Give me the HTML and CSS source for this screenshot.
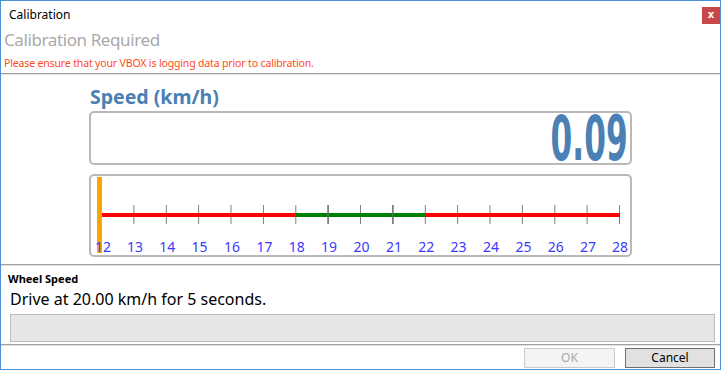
FILE: index.html
```html
<!DOCTYPE html>
<html>
<head>
<meta charset="utf-8">
<link rel="stylesheet" href="styles.css">
</head>
<body>
<div class="window">
  <div class="titlebar">
    <span class="title">Calibration</span>
    <span class="close">x</span>
  </div>
  <div class="header">
    <div class="h-title">Calibration Required</div>
    <div class="h-warn">Please ensure that your VBOX is logging data prior to calibration.</div>
  </div>
  <div class="etch"></div>
  <div class="main">
    <div class="speed-label">Speed (km/h)</div>
    <div class="speed-box"><span class="speed-val">0.09</span></div>
    <div class="scale-box">
      <svg class="scale" width="539" height="79" viewBox="0 0 539 79">
        <g stroke="#808080" stroke-width="1">
          <line x1="10.5" y1="29" x2="10.5" y2="48"/>
          <line x1="42.9" y1="29" x2="42.9" y2="48"/>
          <line x1="75.3" y1="29" x2="75.3" y2="48"/>
          <line x1="107.6" y1="29" x2="107.6" y2="48"/>
          <line x1="140" y1="29" x2="140" y2="48"/>
          <line x1="172.4" y1="29" x2="172.4" y2="48"/>
          <line x1="204.8" y1="29" x2="204.8" y2="48"/>
          <line x1="237.1" y1="29" x2="237.1" y2="48"/>
          <line x1="269.5" y1="29" x2="269.5" y2="48"/>
          <line x1="301.9" y1="29" x2="301.9" y2="48"/>
          <line x1="334.3" y1="29" x2="334.3" y2="48"/>
          <line x1="366.6" y1="29" x2="366.6" y2="48"/>
          <line x1="399" y1="29" x2="399" y2="48"/>
          <line x1="431.4" y1="29" x2="431.4" y2="48"/>
          <line x1="463.8" y1="29" x2="463.8" y2="48"/>
          <line x1="496.1" y1="29" x2="496.1" y2="48"/>
          <line x1="528.5" y1="29" x2="528.5" y2="48"/>
        </g>
        <rect x="10" y="37" width="194.8" height="4" fill="#ff0000"/>
        <rect x="204.8" y="37" width="129.5" height="4" fill="#008000"/>
        <rect x="334.3" y="37" width="194.7" height="4" fill="#ff0000"/>
        <g stroke="#6a6a6a" stroke-width="1.2">
          <line x1="237.1" y1="29" x2="237.1" y2="48"/>
          <line x1="301.9" y1="29" x2="301.9" y2="48"/>
        </g>
        <rect x="6" y="1" width="5" height="76" fill="#ffa500"/>
        <g class="lbl" text-anchor="middle">
          <text x="12" y="76">12</text>
          <text x="43.9" y="76">13</text>
          <text x="76.3" y="76">14</text>
          <text x="108.6" y="76">15</text>
          <text x="141" y="76">16</text>
          <text x="173.4" y="76">17</text>
          <text x="205.8" y="76">18</text>
          <text x="238.1" y="76">19</text>
          <text x="270.5" y="76">20</text>
          <text x="302.9" y="76">21</text>
          <text x="335.3" y="76">22</text>
          <text x="367.6" y="76">23</text>
          <text x="400" y="76">24</text>
          <text x="432.4" y="76">25</text>
          <text x="464.8" y="76">26</text>
          <text x="497.1" y="76">27</text>
          <text x="529" y="76">28</text>
        </g>
      </svg>
    </div>
  </div>
  <div class="etch"></div>
  <div class="status">
    <div class="s-title">Wheel Speed</div>
    <div class="s-msg">Drive at 20.00 km/h for 5 seconds.</div>
    <div class="progress"></div>
  </div>
  <div class="etch"></div>
  <div class="footer">
    <span class="btn btn-disabled">OK</span>
    <span class="btn btn-cancel">Cancel</span>
  </div>
</div>
</body>
</html>
```
FILE: styles.css
```css
* { box-sizing: border-box; }
html, body { margin: 0; padding: 0; background: #ffffff; }
body { font-family: "Noto Sans", "Open Sans", sans-serif; }

.window {
  width: 721px;
  height: 370px;
  border: 1px solid #4a90d9;
  display: flex;
  flex-direction: column;
  background: #ffffff;
  overflow: hidden;
}

.titlebar {
  height: 27px;
  display: flex;
  align-items: flex-start;
  justify-content: space-between;
}
.title {
  font-size: 12px;
  line-height: 16px;
  padding: 6px 0 0 8px;
  color: #000000;
}
.close {
  width: 18px;
  height: 17px;
  margin-top: 6px;
  background: #c8474b;
  color: #ffffff;
  font-size: 10px;
  font-weight: bold;
  line-height: 16px;
  text-align: center;
  font-family: "DejaVu Sans", sans-serif;
}

.header {
  height: 45px;
  padding-left: 3px;
}
.h-title {
  font-size: 17px;
  letter-spacing: -0.4px;
  line-height: 24px;
  color: #a9a9a9;
}
.h-warn {
  font-size: 10.5px;
  letter-spacing: -0.15px;
  line-height: 16px;
  color: #ff4a1c;
  padding-top: 3px;
}

.etch {
  height: 2px;
  border-top: 1px solid #a0a0a0;
  border-bottom: 1px solid #e3e3e3;
  flex: none;
}

.main {
  height: 189px;
  padding: 9px 0 0 88px;
  display: flex;
  flex-direction: column;
}
.speed-label {
  font-size: 19.5px;
  font-weight: bold;
  line-height: 26px;
  color: #4a80b4;
  padding-left: 1px;
}
.speed-box {
  width: 543px;
  height: 54px;
  margin-top: 1px;
  border: 2px solid #b9b9b9;
  border-radius: 5px;
  display: flex;
  justify-content: flex-end;
  align-items: center;
}
.speed-val {
  font-family: "DejaVu Sans", sans-serif;
  font-stretch: condensed;
  font-weight: bold;
  font-size: 62px;
  line-height: 46px;
  color: #4a80b4;
  display: inline-block;
  transform: scaleX(0.56);
  transform-origin: right center;
  margin-right: 2px;
  margin-top: 2px;
}
.scale-box {
  width: 543px;
  height: 83px;
  margin-top: 9px;
  border: 2px solid #b9b9b9;
  border-radius: 5px;
}
.scale { display: block; }
.lbl text {
  font-family: "Noto Sans", sans-serif;
  font-size: 14px;
  fill: #3a3aff;
}

.status {
  height: 78px;
  padding: 6px 5px 0 9px;
  display: flex;
  flex-direction: column;
}
.s-title {
  font-size: 11px;
  font-weight: bold;
  line-height: 14px;
  color: #000000;
  margin-left: -2px;
}
.s-msg {
  font-size: 16px;
  line-height: 22px;
  color: #000000;
  padding-top: 2px;
}
.progress {
  height: 28px;
  margin-top: 4px;
  background: #e6e6e6;
  border: 1px solid #bcbcbc;
}

.footer {
  flex: 1;
  display: flex;
  justify-content: flex-end;
  align-items: flex-start;
  gap: 10px;
  padding: 2px 5px 0 0;
}
.btn {
  width: 91px;
  height: 20px;
  font-size: 12px;
  line-height: 18px;
  text-align: center;
  border: 1px solid #adadad;
}
.btn-disabled {
  background: #f4f4f4;
  border-color: #cccccc;
  color: #a8a8a8;
}
.btn-cancel {
  width: 90px;
  background: #e1e1e1;
  border-color: #707070;
  color: #000000;
}
```
